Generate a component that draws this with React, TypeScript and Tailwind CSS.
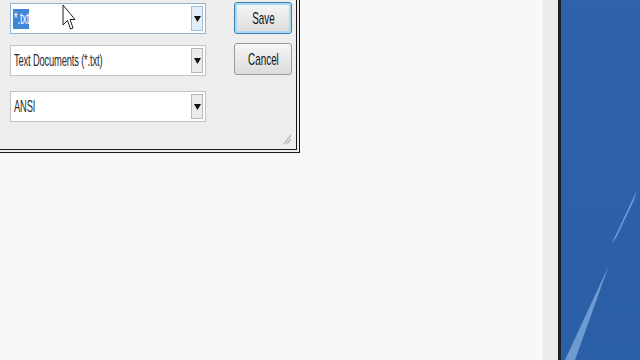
import React from 'react'

const font = { fontFamily: '"Liberation Sans", Arial, sans-serif' }

function Arrow() {
  return (
    <svg width="7" height="6" viewBox="0 0 7 6">
      <path d="M0 0 H7 L3.5 6 Z" fill="#111" />
    </svg>
  )
}

function Combo({ children, focused = false }: { children: React.ReactNode; focused?: boolean }) {
  return (
    <div
      className={`flex h-[31px] w-[196px] items-center border bg-white pl-[2px] pr-[2px] ${
        focused ? 'border-[#8fb4d9]' : 'border-[#c4c4c4]'
      }`}
    >
      <div className="flex-1 overflow-hidden">{children}</div>
      <div
        className={`flex h-[25px] w-[12px] items-center justify-center border ${
          focused ? 'border-[#9fbcd8] bg-[#e4eef8]' : 'border-[#b8b8b8] bg-[#ececec]'
        }`}
      >
        <Arrow />
      </div>
    </div>
  )
}

function Label({ text, light = false }: { text: string; light?: boolean }) {
  return (
    <span
      className={`inline-block origin-left scale-x-[0.55] whitespace-nowrap text-[17px] leading-none tracking-[-0.3px] ${
        light ? 'text-white' : 'text-[#2a2a2a]'
      }`}
    >
      {text}
    </span>
  )
}

function Btn({ text, focused = false }: { text: string; focused?: boolean }) {
  return (
    <div
      className={`flex h-[32px] w-[58px] items-center justify-center rounded-[3px] border bg-gradient-to-b from-[#f6f6f6] to-[#dcdcdc] ${
        focused ? 'border-[#3c7fb1] shadow-[inset_0_0_0_2px_#a7daf5]' : 'border-[#9a9a9a]'
      }`}
    >
      <span className="inline-block scale-x-[0.58] text-[17px] leading-none text-[#111]">{text}</span>
    </div>
  )
}

export default function App() {
  return (
    <div className="flex h-[360px] w-[640px] overflow-hidden bg-[#f8f8f8]" style={font}>
      <div className="flex-1">
        {/* Save As dialog */}
        <div className="h-[153px] w-[300px] border-b-[4px] border-r-[4px] border-double border-[#1a1a1a] bg-[#ededed]">
          <div className="relative flex h-full gap-[28px] pl-[10px] pt-[2px]">
            <div className="flex flex-col pt-[1px]">
              <Combo focused>
                <span className="flex h-[20px] w-[16px] items-center overflow-visible bg-[#3f86d6] pl-[1px]">
                  <Label text="*.txt" light />
                </span>
              </Combo>
              <div className="pt-[11px]">
                <Combo>
                  <span className="block pl-[1px]">
                    <Label text="Text Documents (*.txt)" />
                  </span>
                </Combo>
              </div>
              <div className="pt-[15px]">
                <Combo>
                  <span className="block pl-[1px]">
                    <Label text="ANSI" />
                  </span>
                </Combo>
              </div>
            </div>
            <div className="flex flex-col gap-[9px]">
              <Btn text="Save" focused />
              <Btn text="Cancel" />
            </div>
            {/* resize grip */}
            <svg className="absolute bottom-[4px] right-[4px]" width="10" height="12" viewBox="0 0 10 12">
              <path d="M9 2 L2 11 M9 6 L5 11" stroke="#bdbdbd" strokeWidth="1.5" />
            </svg>
            {/* mouse cursor */}
            <svg className="absolute left-[62px] top-[4px]" width="14" height="28" viewBox="0 0 14 28">
              <path d="M1 1 L1 21 L5.5 16.5 L8.5 25 L11 24 L8 15.5 L13 15.5 Z" fill="#fff" stroke="#222" strokeWidth="1" />
            </svg>
          </div>
        </div>
      </div>
      {/* right edge of window */}
      <div className="w-[15px] bg-[#ebebeb]" />
      <div className="w-[3px] bg-[#1c1f24]" />
      {/* desktop */}
      <div className="relative w-[79px] bg-gradient-to-b from-[#2f62aa] to-[#2a5ea6]">
        <svg className="absolute inset-0" width="79" height="360" viewBox="0 0 79 360">
          <path d="M76 190 L51 243 L55 238 L73 200 Z" fill="#8ab3e4" opacity="0.75" />
          <path d="M48 265 L4 360 L14 360 Z" fill="#8ab3e4" opacity="0.7" />
        </svg>
      </div>
    </div>
  )
}
